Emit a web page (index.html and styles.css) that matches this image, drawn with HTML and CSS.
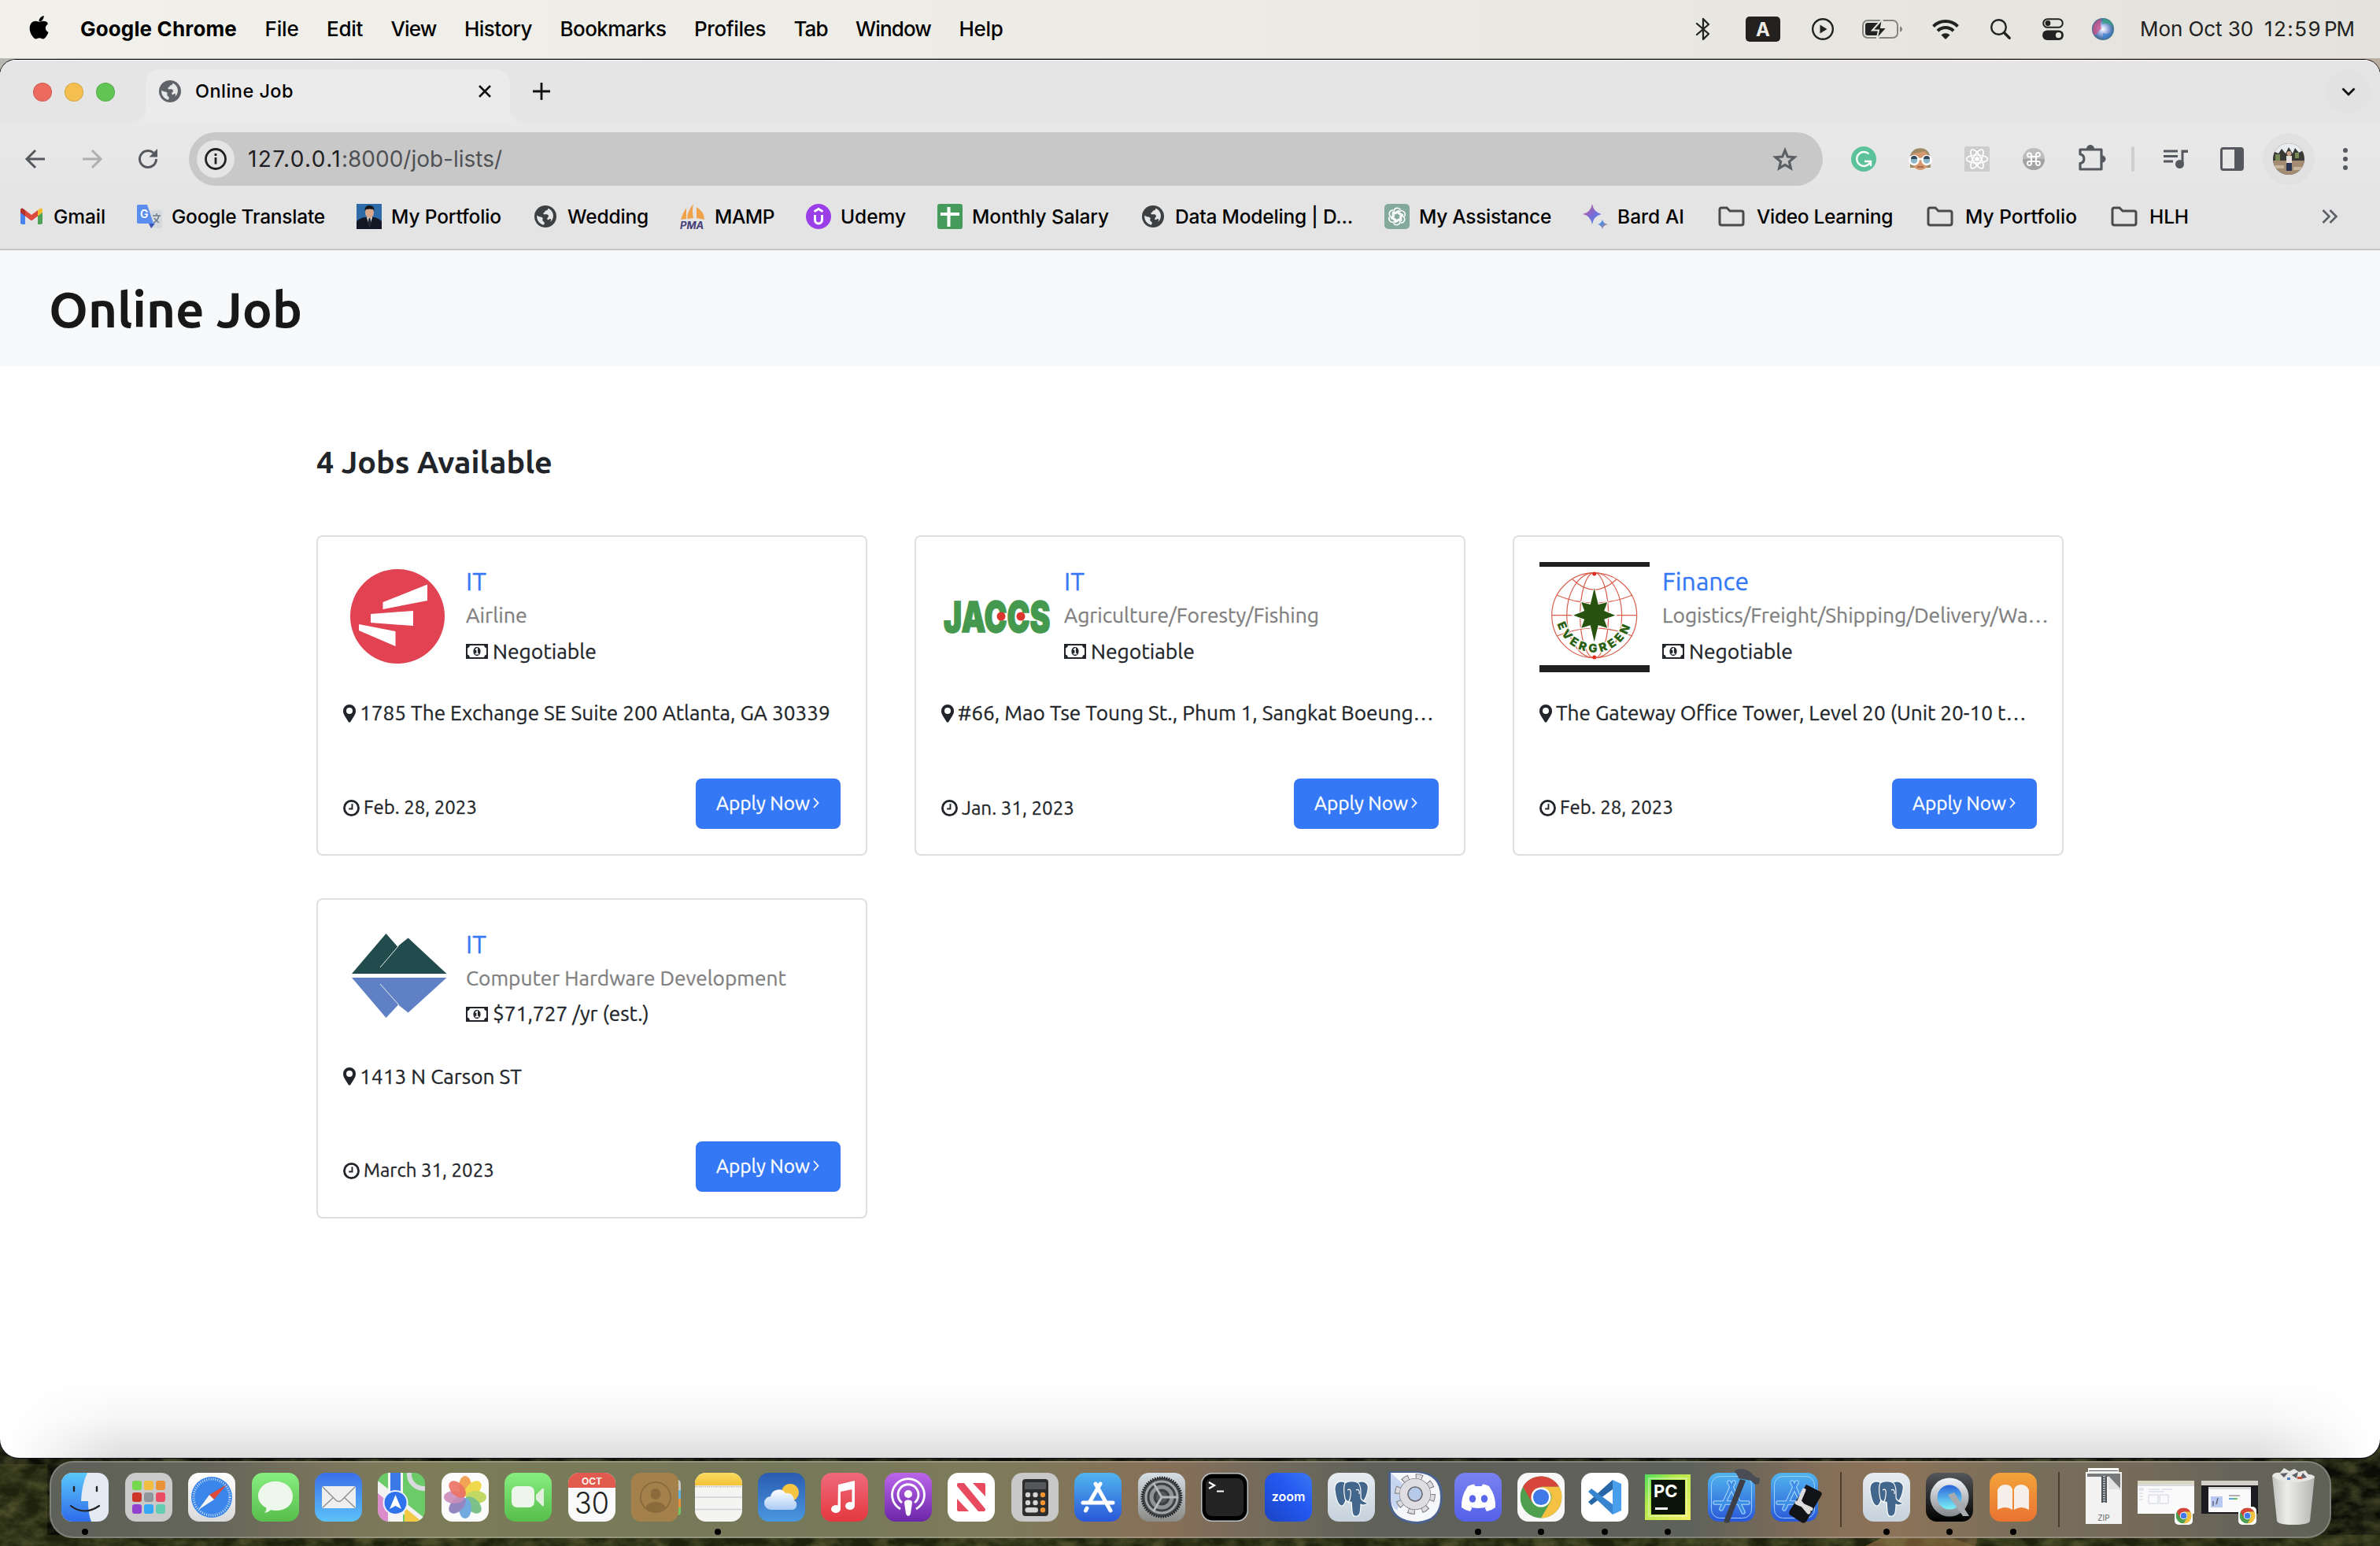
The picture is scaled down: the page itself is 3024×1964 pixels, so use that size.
FILE: index.html
```html
<!DOCTYPE html>
<html lang="en">
<head>
<meta charset="utf-8">
<title>Online Job</title>
<link rel="stylesheet" href="styles.css">
</head>
<body>
<svg class="defs" width="0" height="0">
  <defs>
    <linearGradient id="gBlue" x1="0" y1="0" x2="0" y2="1"><stop offset="0" stop-color="#5ac8fa"/><stop offset="1" stop-color="#2f6bea"/></linearGradient>
    <linearGradient id="gMail" x1="0" y1="0" x2="0" y2="1"><stop offset="0" stop-color="#3a6fe8"/><stop offset="1" stop-color="#5cc2f9"/></linearGradient>
    <linearGradient id="gGreen" x1="0" y1="0" x2="0" y2="1"><stop offset="0" stop-color="#87ef80"/><stop offset="1" stop-color="#57bd4b"/></linearGradient>
    <linearGradient id="gWhite" x1="0" y1="0" x2="0" y2="1"><stop offset="0" stop-color="#ffffff"/><stop offset="1" stop-color="#d9d9d9"/></linearGradient>
    <linearGradient id="gWeather" x1="0" y1="0" x2="0" y2="1"><stop offset="0" stop-color="#2a5bb0"/><stop offset="1" stop-color="#4a97e0"/></linearGradient>
    <linearGradient id="gCloud" x1="0" y1="0" x2="0" y2="1"><stop offset="0" stop-color="#ffffff"/><stop offset="1" stop-color="#aacbf3"/></linearGradient>
    <linearGradient id="gMusic" x1="0" y1="0" x2="0" y2="1"><stop offset="0" stop-color="#ee6a7b"/><stop offset="1" stop-color="#e4383f"/></linearGradient>
    <linearGradient id="gPod" x1="0" y1="0" x2="0" y2="1"><stop offset="0" stop-color="#bb66ea"/><stop offset="1" stop-color="#6c26a8"/></linearGradient>
    <linearGradient id="gStore" x1="0" y1="0" x2="0" y2="1"><stop offset="0" stop-color="#51b5ef"/><stop offset="1" stop-color="#2a57d8"/></linearGradient>
    <linearGradient id="gSettings" x1="0" y1="0" x2="0" y2="1"><stop offset="0" stop-color="#d5dfe5"/><stop offset="1" stop-color="#8b8b88"/></linearGradient>
    <linearGradient id="gZoom" x1="1" y1="0" x2="0" y2="1"><stop offset="0" stop-color="#3b7af0"/><stop offset=".4" stop-color="#2459f2"/><stop offset="1" stop-color="#1b44c4"/></linearGradient>
    <linearGradient id="gPg" x1="0" y1="0" x2="0" y2="1"><stop offset="0" stop-color="#e6ecf1"/><stop offset="1" stop-color="#c6d1dc"/></linearGradient>
    <linearGradient id="gDiscord" x1="0" y1="0" x2="0" y2="1"><stop offset="0" stop-color="#7a82f0"/><stop offset="1" stop-color="#5560ea"/></linearGradient>
    <linearGradient id="gPc" x1="0" y1="0" x2="1" y2="1"><stop offset="0" stop-color="#4fe05a"/><stop offset=".35" stop-color="#b3ea4a"/><stop offset="1" stop-color="#f3ee62"/></linearGradient>
    <linearGradient id="gQt" x1="0" y1="0" x2="0" y2="1"><stop offset="0" stop-color="#55565a"/><stop offset="1" stop-color="#000"/></linearGradient>
    <linearGradient id="gRing" x1="0" y1="0" x2="0" y2="1"><stop offset="0" stop-color="#f2f6fa"/><stop offset="1" stop-color="#84878b"/></linearGradient>
    <linearGradient id="gQtIn" x1="0" y1="0" x2="0" y2="1"><stop offset="0" stop-color="#2a62d8"/><stop offset="1" stop-color="#7df3f7"/></linearGradient>
    <linearGradient id="gBooks" x1="0" y1="0" x2="0" y2="1"><stop offset="0" stop-color="#f2a33a"/><stop offset="1" stop-color="#ea7332"/></linearGradient>
    <linearGradient id="gNote" x1="0" y1="0" x2="0" y2="1"><stop offset="0" stop-color="#fadb62"/><stop offset="1" stop-color="#f3c235"/></linearGradient>
    <linearGradient id="gBard" x1="0" y1="0" x2="1" y2="1"><stop offset="0" stop-color="#d9617e"/><stop offset=".4" stop-color="#7a6bd8"/><stop offset=".75" stop-color="#4d8fe6"/><stop offset="1" stop-color="#e2705a"/></linearGradient>
    <linearGradient id="gCan" x1="0" y1="0" x2="1" y2="0"><stop offset="0" stop-color="#c2c2c0"/><stop offset=".35" stop-color="#ececea"/><stop offset="1" stop-color="#b4b4b2"/></linearGradient>
    <radialGradient id="gSiri"><stop offset="0" stop-color="#fff"/><stop offset=".4" stop-color="#a9b8e6"/><stop offset=".75" stop-color="#5a7fb8"/><stop offset="1" stop-color="#3d6c86"/></radialGradient>
    <filter id="leaves" x="0" y="0" width="100%" height="100%">
      <feTurbulence type="fractalNoise" baseFrequency=".035 .06" numOctaves="4" seed="7"/>
      <feColorMatrix values="0 0 0 0 .24  0 0 0 0 .25  0 0 0 0 .08  1.9 1.2 0 0 -1.15"/>
    </filter>

    <symbol id="globe" viewBox="0 0 28 28"><circle cx="14" cy="14" r="14" fill="currentColor"/><path d="M16 3.2c2.600.8.8 2.900-1 3.100-1.700.2-1.300 2.300-2.700 2.700-1.800.5-.6 2.600.6 2.400 2-.3 4.600-.4 5.100 1.900.3 1.500-1.800 2-1.700 3.700.1 1.600 1.900 1.300 2.700.5 1-.9 2.200-.2 2.100 1l-.8 2.500c3.500-2.600 4.700-8.200 2.600-12.200-1.300-2.900-3.700-4.900-6.900-5.600zM3.300 12.500c-.9 5.900 3.100 11.100 8.700 12.300l.9-2.500c-.1-1.700-2.300-1.500-2.600-3.200-.2-1.300.8-2.200.1-3.300-1.500-1.900-4.700-.7-7.100-3.300z" class="globe-land"/></symbol>
    <symbol id="folder" viewBox="0 0 34 26"><path d="M2 4.500A2.500 2.500 0 0 1 4.500 2H11l4 4h14.500A2.500 2.500 0 0 1 32 8.500v13a2.500 2.500 0 0 1-2.500 2.500h-25A2.500 2.500 0 0 1 2 21.500z" fill="none" stroke="#4a4a4c" stroke-width="3"/></symbol>
    <symbol id="note" viewBox="0 0 28 19"><path fill="currentColor" fill-rule="evenodd" d="M0 0h28v19H0zM5 2Q4.600 5 2 5.500v8Q4.600 14 5 17h18q.4-3 3-3.500v-8Q23.400 5 23 2z"/><ellipse cx="14" cy="9.500" rx="4.600" ry="5.800" fill="currentColor"/><path d="M12 7.400l2.200-1.500v6.300M11.800 12.600h4.600" stroke="#fff" stroke-width="1.600" fill="none"/></symbol>
    <symbol id="pin" viewBox="0 0 16 23"><path fill="currentColor" fill-rule="evenodd" d="M8 0a8 8 0 0 1 8 8c0 3-1 4.500-2 6.600L9.300 22a1.500 1.500 0 0 1-2.600 0L2 14.600C1 12.500 0 11 0 8a8 8 0 0 1 8-8zm0 4a4 4 0 1 0 0 8 4 4 0 0 0 0-8z"/></symbol>
    <symbol id="clock" viewBox="0 0 22 22"><circle cx="11" cy="11" r="9.500" fill="none" stroke="currentColor" stroke-width="2.900"/><path d="M12 5.500v6.500H7.500" fill="none" stroke="currentColor" stroke-width="2"/></symbol>
    <symbol id="chev" viewBox="0 0 8 14"><path d="M1 1l5.500 6L1 13" fill="none" stroke="#fff" stroke-width="1.800"/></symbol>
    <symbol id="chrome" viewBox="0 0 54 54"><circle cx="27" cy="27" r="27" fill="#4f9f50"/><path d="M3.600 13.500A27 27 0 0 1 50.400 13.500H27L15.300 33.700z" fill="#d6453a"/><path d="M50.400 13.500A27 27 0 0 1 27 54L38.700 33.700A13.500 13.500 0 0 0 38.700 20.200L27 13.500z" fill="#f4c143"/><circle cx="27" cy="27" r="12.800" fill="#fff"/><circle cx="27" cy="27" r="10.300" fill="#4179e8"/></symbol>
    <symbol id="elephant" viewBox="0 0 60 62">
      <rect width="60" height="62" rx="14" fill="url(#gPg)"/>
      <g fill="#43668c" stroke="#fff" stroke-width="1.200" stroke-linejoin="round">
        <path d="M38 12c8-3 15 1 13 10-1 7-5 14-8 17l-5-8z"/>
        <path d="M22 12c-7-3-14 0-13 10 1 10 4 19 8 20 3 1 5-4 6-7z"/>
        <path d="M22 13c4-3 13-3 17 0 4 5 3 13 3 18 0 4 6 7 9 7-2 3-7 4-9 2 0 5 0 10-2 13-2 3-7 3-8 0-2-4-1-11-2-16-3 1-7-1-8-4-1-6-3-14 0-20z"/>
      </g>
      <path d="M25 22c4-3 5 2 4 7s-1 8-4 8M36 22c3-2 5 1 4 5" stroke="#fff" stroke-width="1.200" fill="none"/>
    </symbol>
    <symbol id="blueprint" viewBox="0 0 60 62">
      <rect width="60" height="62" rx="14" fill="url(#gStore)"/>
      <rect x="4.500" y="4.500" width="51" height="53" rx="11" fill="none" stroke="#9bd0f7" stroke-width="1"/>
      <path d="M33 12L17 46M27 12l18 38M9 38h42" stroke="#a9d9fb" stroke-width="5.500" stroke-linecap="round"/><path d="M33 12L17 46M27 12l18 38M9 38h42" stroke="#3f8ee6" stroke-width="3.500" stroke-linecap="round"/>
    </symbol>
  </defs>
</svg>

<header class="menubar">
  <svg class="apple" viewBox="0 0 26 31" width="26" height="31"><path d="M18.700 0c.2 2.100-.6 4-1.800 5.400-1.200 1.400-2.900 2.300-4.400 2.200-.3-2 .7-4 1.800-5.200C15.500 1.100 17.300.1 18.700 0zM23.600 10.900c-1.700 1-2.800 2.600-2.800 4.700 0 2.500 1.500 4.400 3.700 5.300-.5 1.600-1.300 3.200-2.400 4.800-1.400 2-2.600 3.700-4.500 3.700-1.700 0-2.400-1.100-4.500-1.100s-2.900 1.100-4.500 1.200c-1.900.1-3.300-1.900-4.700-3.900C1 21.400-.8 14.400 2.300 10c1.400-2 3.700-3.200 5.900-3.200 2 0 3.500 1.200 4.900 1.200 1.300 0 3.200-1.400 5.700-1.200 1.500.1 3.600.6 4.800 2.400z" fill="#000"/></svg>
  <nav class="menus">
    <b class="fit" data-w="199">Google Chrome</b>
    <span class="fit" data-w="43">File</span>
    <span class="fit" data-w="46">Edit</span>
    <span class="fit" data-w="58">View</span>
    <span class="fit" data-w="86">History</span>
    <span class="fit" data-w="135">Bookmarks</span>
    <span class="fit" data-w="91">Profiles</span>
    <span class="fit" data-w="43">Tab</span>
    <span class="fit" data-w="96">Window</span>
    <span class="fit" data-w="56">Help</span>
  </nav>
  <div class="status">
    <svg width="18" height="30" viewBox="0 0 18 30"><path d="M1 8l15 13-7 7V2l7 7L1 22" fill="none" stroke="#222" stroke-width="2.300" stroke-linejoin="round" stroke-linecap="round"/></svg>
    <svg width="44" height="32" viewBox="0 0 44 32"><rect width="44" height="32" rx="5" fill="#22211f"/><text x="22" y="25" text-anchor="middle" font-size="24" font-weight="700" fill="#ecebe5">A</text></svg>
    <svg width="28" height="28" viewBox="0 0 28 28"><circle cx="14" cy="14" r="12.800" fill="none" stroke="#222" stroke-width="2.400"/><path d="M10.500 8.500v11l9-5.500z" fill="#222"/></svg>
    <svg width="52" height="26" viewBox="0 0 52 26"><rect x="1" y="2" width="44" height="22" rx="6" fill="none" stroke="#85847f" stroke-width="2"/><rect x="4" y="5" width="19" height="16" rx="3" fill="#222"/><path d="M48 9.500v7q3-1 3-3.500t-3-3.500z" fill="#85847f"/><path d="M26 0L13 14.500h8L18.500 26 32 11h-8z" fill="#222" stroke="#e6e5df" stroke-width="2"/></svg>
    <svg width="34" height="26" viewBox="0 0 34 26"><path d="M1.500 9.500a22 22 0 0 1 31 0M7 15.200a14.300 14.300 0 0 1 20 0" fill="none" stroke="#222" stroke-width="4"/><path d="M17 26l-5.500-5.500a8 8 0 0 1 11 0z" fill="#222"/></svg>
    <svg width="26" height="26" viewBox="0 0 26 26"><circle cx="10.500" cy="10.500" r="9.300" fill="none" stroke="#222" stroke-width="2.400"/><path d="M17.500 17.500l6.700 6.700" stroke="#222" stroke-width="3.400" stroke-linecap="round"/></svg>
    <svg width="27" height="28" viewBox="0 0 27 28"><rect x="1.200" y="1.200" width="24.600" height="10.600" rx="5.300" fill="none" stroke="#222" stroke-width="2"/><circle cx="7" cy="6.500" r="3.400" fill="#222"/><rect y="15.500" width="27" height="12.500" rx="6.200" fill="#222"/><circle cx="20.500" cy="21.700" r="3.600" fill="#e5e4de"/></svg>
    <svg width="28" height="28" viewBox="0 0 28 28"><circle cx="14" cy="14" r="14" fill="url(#gSiri)"/><path d="M1 14A13.500 13.500 0 0 1 12 1q-2 8 0 12L4 22q-3-3-3-8z" fill="#d24f86" opacity=".75"/><path d="M14 .5q10 1 13 10-8-5-14-3z" fill="#3aa384" opacity=".8"/><path d="M14 27q9-1 13-10-6 5-13 2z" fill="#3a7fd0" opacity=".7"/></svg>
  </div>
  <div class="clock"><span class="fit" data-w="144">Mon Oct 30</span><span class="fit" data-w="73">12:59</span><span class="fit" data-w="38">PM</span></div>
</header>

<main class="window">
  <div class="tabstrip">
    <div class="lights"><i class="red"></i><i class="yellow"></i><i class="green"></i></div>
    <div class="tab">
      <svg class="tab-globe" width="28" height="28"><use href="#globe"/></svg>
      <span class="fit tab-title" data-w="125">Online Job</span>
      <svg width="16" height="16" viewBox="0 0 16 16"><path d="M1 1l14 14M15 1L1 15" stroke="#111" stroke-width="2.600"/></svg>
    </div>
    <svg class="plus" width="22" height="22" viewBox="0 0 22 22"><path d="M11 0v22M0 11h22" stroke="#111" stroke-width="2.800"/></svg>
    <div class="tab-search"><svg width="18" height="12" viewBox="0 0 18 12"><path d="M1.500 1.500L9 9l7.500-7.500" fill="none" stroke="#111" stroke-width="2.800"/></svg></div>
  </div>

  <div class="toolbar">
    <div class="nav">
      <svg width="26" height="26" viewBox="0 0 26 26"><path d="M25 13H2.500M13 2L2 13l11 11" fill="none" stroke="#55595e" stroke-width="3"/></svg>
      <svg width="26" height="26" viewBox="0 0 26 26"><path d="M1 13h22.500M13 2l11 11-11 11" fill="none" stroke="#adafb1" stroke-width="3"/></svg>
      <svg width="26" height="26" viewBox="0 0 26 26"><path d="M23.500 13A10.500 10.500 0 1 1 20 5.200" fill="none" stroke="#55595e" stroke-width="3"/><path d="M25 0v10.500H14.500z" fill="#55595e"/></svg>
    </div>
    <div class="omnibox">
      <span class="info"><svg width="28" height="28" viewBox="0 0 28 28"><circle cx="14" cy="14" r="12.500" fill="none" stroke="#1f2023" stroke-width="2.800"/><path d="M14 12v8.500M14 7v3" stroke="#1f2023" stroke-width="2.800"/></svg></span>
      <span class="url"><span class="fit host" data-w="119">127.0.0.1</span><span class="fit" data-w="204">:8000/job-lists/</span></span>
      <svg width="32" height="31" viewBox="0 0 32 31"><path d="M16 4l3.300 8 8.700.7-6.600 5.700 2 8.400L16 22.400l-7.400 4.400 2-8.400L4 12.700l8.700-.7z" fill="none" stroke="#5c5f63" stroke-width="3.200"/></svg>
    </div>
    <div class="extensions">
      <svg width="32" height="32" viewBox="0 0 32 32"><circle cx="16" cy="16" r="16" fill="#5bc29b"/><path d="M22.500 9.500a9 9 0 1 0 1.500 11M17 19h8v6" fill="none" stroke="#fff" stroke-width="2.400"/></svg>
      <svg width="32" height="32" viewBox="0 0 32 32"><path d="M3 12C6-1 26-1 28 12l1 15H3z" fill="#9d8a65"/><path d="M7 9l15-3 4 6v10q-3 8-10 8T6 22z" fill="#d5996f"/><circle cx="8" cy="17.500" r="5.500" fill="#8ab8c8" stroke="#fff" stroke-width="2.400"/><circle cx="24" cy="17.500" r="5.500" fill="#8ab8c8" stroke="#fff" stroke-width="2.400"/><path d="M13 16h6" stroke="#fff" stroke-width="2.400"/><path d="M4 16a4 4 0 0 1 8 0zM20 16a4 4 0 0 1 8 0z" fill="#32485a"/><path d="M12 26h8" stroke="#a65a48" stroke-width="1.500"/></svg>
      <svg width="32" height="32" viewBox="0 0 32 32"><rect width="32" height="32" rx="2" fill="#cdcdcd"/><g fill="none" stroke="#fff" stroke-width="1.700"><ellipse cx="16" cy="16" rx="13.500" ry="5"/><ellipse cx="16" cy="16" rx="13.500" ry="5" transform="rotate(60 16 16)"/><ellipse cx="16" cy="16" rx="13.500" ry="5" transform="rotate(120 16 16)"/></g><circle cx="16" cy="16" r="2.800" fill="#fff"/></svg>
      <svg width="28" height="28" viewBox="0 0 28 28"><circle cx="14" cy="14" r="14" fill="#bdbdbd"/><path d="M0 14h28a14 14 0 0 1-28 0z" fill="#a2a2a2"/><path d="M11 11h6v6h-6zM11 11V9a2.500 2.500 0 1 0-2.500 2.500zM17 11h2.500A2.500 2.500 0 1 0 17 9zM17 17v2.500a2.500 2.500 0 1 0 2.500-2.500zM11 17H8.500a2.500 2.500 0 1 0 2.500 2.500z" fill="none" stroke="#fff" stroke-width="1.900"/></svg>
      <svg class="puzzle" width="34" height="34" viewBox="0 0 34 34"><path d="M3.500 7H29v25H2V24.500c6.500-1 6.500-10.500 0-11.500V7z" fill="none" stroke="#55595f" stroke-width="3.200" stroke-linejoin="round"/><path d="M10 6a5 5 0 0 1 10 0zM30 14.500a4.500 4.500 0 0 1 0 9z" fill="#55595f"/></svg>
      <i class="divider"></i>
      <svg width="32" height="26" viewBox="0 0 32 26"><path d="M0 3h18M0 9.500h18M0 16h12" stroke="#55595f" stroke-width="3"/><path d="M22.500 1.500H31v3.500h-5.500v14h-3z" fill="#55595f"/><circle cx="20.500" cy="19.500" r="5.500" fill="#55595f"/></svg>
      <svg width="30" height="30" viewBox="0 0 30 30"><rect x="1.500" y="1.500" width="27" height="27" rx="2.500" fill="none" stroke="#55595f" stroke-width="3"/><path d="M18 2h11v26H18z" fill="#55595f"/></svg>
      <span class="avatar"><svg width="40" height="40" viewBox="0 0 40 40"><clipPath id="av"><circle cx="20" cy="20" r="20"/></clipPath><g clip-path="url(#av)"><path d="M0 0h40v40H0z" fill="#3a3a35"/><path d="M0 0h40v8l-7 4-5-6-3 7-5-8-4 8-5-6-4 6-7-3z" fill="#e9edf2"/><path d="M0 22h40v18H0z" fill="#a38b74"/><path d="M0 28h14v4H0zM26 30h14v4H26z" fill="#c9b6a0"/><path d="M3 14h6v8H3zM28 12h5v7h-5z" fill="#758a55"/><path d="M17 16h7v9h-7z" fill="#e8e0da"/><path d="M17 25h7v10h-7z" fill="#2b3450"/><circle cx="20.500" cy="13" r="3" fill="#cda28a"/></g></svg></span>
      <svg width="6" height="30" viewBox="0 0 6 30"><g fill="#55595f"><circle cx="3" cy="4" r="3"/><circle cx="3" cy="15" r="3"/><circle cx="3" cy="26" r="3"/></g></svg>
    </div>
  </div>

  <div class="bookmarks">
    <a><svg width="32" height="32" viewBox="0 0 32 32"><path d="M2 7v17a2 2 0 0 0 2 2h4V12z" fill="#4a84ee"/><path d="M30 7v17a2 2 0 0 1-2 2h-4V12z" fill="#4ea155"/><path d="M24 8l3-2.200C28.500 4.700 30 6 30 7.500V11l-6 4.500z" fill="#f3bc2e"/><path d="M8 8L5 5.800C3.500 4.700 2 6 2 7.500V11l6 4.500z" fill="#b4322c"/><path d="M8 15.500V8l8 6 8-6v7.500l-8 6z" fill="#db4a3d"/></svg><span class="fit" data-w="66">Gmail</span></a>
    <a><svg width="32" height="32" viewBox="0 0 32 32"><path d="M13 8h17a2 2 0 0 1 2 2v19a2 2 0 0 1-2 2H18z" fill="#d6dade"/><path d="M15 25h8l-5 6z" fill="#3a55b8"/><path d="M2 1h11l8 24H2a2 2 0 0 1-2-2V3a2 2 0 0 1 2-2z" fill="#5a8dee"/><text x="4" y="18" font-size="14" font-weight="600" fill="#fff">G</text><path d="M20 15h10M25 12v3M28 15q-2 7-7 9M22 18q3 4 6 6" stroke="#6b7b89" stroke-width="1.500" fill="none"/></svg><span class="fit" data-w="195">Google Translate</span></a>
    <a><svg width="32" height="32" viewBox="0 0 32 32"><path d="M0 0h32v32H0z" fill="#2e6ba8"/><path d="M0 32V22q6-5 11-5h10q5 0 11 5v10z" fill="#141824"/><path d="M13 17h7l-3.500 12z" fill="#e7ebf0"/><path d="M15.500 18h2l1 7-2 4-2-4z" fill="#20283a"/><ellipse cx="16.500" cy="11" rx="5.500" ry="7" fill="#d9a88c"/><path d="M10.500 9Q10 2 16.500 2T22.500 9L21 7q-4-1-9 0z" fill="#15161b"/></svg><span class="fit" data-w="140">My Portfolio</span></a>
    <a><svg class="bm-globe" width="32" height="28"><use href="#globe"/></svg><span class="fit" data-w="103">Wedding</span></a>
    <a><svg width="32" height="32" viewBox="0 0 32 32"><path d="M8 5Q3 12 1 20l7-1zM17 0Q9 10 9 19l8-1Q15 8 17 0zM21 4q10 6 10 16l-10-2z" fill="#f0a24a"/><text x="0" y="31.500" font-size="13" font-weight="700" font-style="italic" fill="#45407a">PMA</text></svg><span class="fit" data-w="76">MAMP</span></a>
    <a><svg width="32" height="32" viewBox="0 0 32 32"><circle cx="16" cy="16" r="16" fill="#9a3fe8"/><path d="M11.500 14v6.500a4.500 4.500 0 0 0 9 0V14" fill="none" stroke="#fff" stroke-width="3"/><path d="M10.500 9.800L16 6.500l5.500 3.300" fill="none" stroke="#fff" stroke-width="2.800"/></svg><span class="fit" data-w="83">Udemy</span></a>
    <a><svg width="32" height="32" viewBox="0 0 32 32"><rect width="32" height="32" rx="3" fill="#449b5c"/><path d="M14.500 4v25M4 13h24" stroke="#fff" stroke-width="4"/></svg><span class="fit" data-w="174">Monthly Salary</span></a>
    <a><svg class="bm-globe" width="32" height="28"><use href="#globe"/></svg><span class="fit" data-w="226">Data Modeling | D...</span></a>
    <a><svg width="32" height="32" viewBox="0 0 32 32"><rect width="32" height="32" rx="5" fill="#83a99b"/><g fill="none" stroke="#fff" stroke-width="1.600"><path id="petal" d="M12 17V9.500a4.500 4.500 0 0 1 8.500-1.800M12 12l6.500-3.800"/><use href="#petal" transform="rotate(60 16 16)"/><use href="#petal" transform="rotate(120 16 16)"/><use href="#petal" transform="rotate(180 16 16)"/><use href="#petal" transform="rotate(240 16 16)"/><use href="#petal" transform="rotate(300 16 16)"/></g></svg><span class="fit" data-w="168">My Assistance</span></a>
    <a><svg width="32" height="32" viewBox="0 0 32 32"><path d="M12 0q2 11 12 13-10 2-12 13Q10 15 0 13 10 11 12 0zM25 20q1 5 7 6-6 1-7 6-1-5-6-6 5-1 6-6z" fill="url(#gBard)"/></svg><span class="fit" data-w="85">Bard AI</span></a>
    <a class="dir"><svg width="34" height="26"><use href="#folder"/></svg><span class="fit" data-w="173">Video Learning</span></a>
    <a class="dir"><svg width="34" height="26"><use href="#folder"/></svg><span class="fit" data-w="142">My Portfolio</span></a>
    <a class="dir"><svg width="34" height="26"><use href="#folder"/></svg><span class="fit" data-w="50">HLH</span></a>
    <svg class="more" width="20" height="18" viewBox="0 0 20 18"><path d="M1.500 1l8 8-8 8M10.500 1l8 8-8 8" fill="none" stroke="#5c5f66" stroke-width="2.600"/></svg>
  </div>

  <section class="page">
    <div class="banner"><h1 class="fit" data-w="322">Online Job</h1></div>
    <div class="content">
      <h2><span class="fit" data-w="300">4 Jobs Available</span></h2>
      <div class="cards">
        <article class="card">
          <div class="top">
            <svg width="140" height="140" viewBox="0 0 140 140"><path d="M0 0h140v140H0z" fill="#fefefe"/><circle cx="69" cy="69" r="60" fill="#e14352"/><path d="M50.500 51L107 28.500V49L50.500 60zM35 66l54-4v19l-54-4zM20 79l46.500 9v19L20 87z" fill="#fff"/></svg>
            <div class="info-col"><a class="role">IT</a><div class="field"><span class="fit" data-w="78">Airline</span></div><div class="pay"><svg width="28" height="19"><use href="#note"/></svg><span class="fit" data-w="132">Negotiable</span></div></div>
          </div>
          <div class="addr"><svg width="16" height="23"><use href="#pin"/></svg><span class="fit" data-w="598">1785 The Exchange SE Suite 200 Atlanta, GA 30339</span></div>
          <div class="foot"><div class="date"><svg width="21" height="21"><use href="#clock"/></svg><span class="fit" data-w="144">Feb. 28, 2023</span></div><a class="apply"><span class="fit" data-w="119">Apply Now</span><svg width="8" height="14"><use href="#chev"/></svg></a></div>
        </article>
        <article class="card">
          <div class="top">
            <svg width="140" height="140" viewBox="0 0 140 140"><g transform="translate(3 89) scale(.72 1)"><text class="jaccs">JACCS</text></g><circle cx="76" cy="69" r="5.500" fill="#dc352e"/><circle cx="101" cy="69" r="5.500" fill="#dc352e"/></svg>
            <div class="info-col"><a class="role">IT</a><div class="field"><span class="fit" data-w="324">Agriculture/Foresty/Fishing</span></div><div class="pay"><svg width="28" height="19"><use href="#note"/></svg><span class="fit" data-w="132">Negotiable</span></div></div>
          </div>
          <div class="addr"><svg width="16" height="23"><use href="#pin"/></svg><span class="fit" data-w="605">#66, Mao Tse Toung St., Phum 1, Sangkat Boeung…</span></div>
          <div class="foot"><div class="date"><svg width="21" height="21"><use href="#clock"/></svg><span class="fit" data-w="143">Jan. 31, 2023</span></div><a class="apply"><span class="fit" data-w="119">Apply Now</span><svg width="8" height="14"><use href="#chev"/></svg></a></div>
        </article>
        <article class="card">
          <div class="top">
            <svg width="140" height="140" viewBox="0 0 140 140"><path d="M0 0h140v6H0zM0 131h140v9H0z" fill="#202020"/>
              <g fill="none" stroke="#d9604f" stroke-width="1.200"><circle cx="69.700" cy="67.700" r="54"/><ellipse cx="69.700" cy="67.700" rx="35" ry="54"/><ellipse cx="69.700" cy="67.700" rx="18" ry="54"/><path d="M15.700 67.700h108M22 42q48 20 96 0M42 22q27 26 56 0M22 94q48-20 96 0"/></g>
              <path d="M69.700 33l5 21 11.500-3-4 11 14 5.700-14 5 4 11-11.500-3.500-5 21-5-21-11.500 3.500 4-11-14-5 14-5.700-4-11 11.500 3z" fill="#27530f" stroke="#fff" stroke-width="2" paint-order="stroke"/>
              <circle cx="69.700" cy="15" r="2.500" fill="#e02b1d"/><circle cx="69.700" cy="121" r="2.500" fill="#e02b1d"/>
              <path id="arc" d="M21 66a48.700 48.700 0 0 0 97.400 0" fill="none"/><text class="evergreen"><textPath href="#arc" startOffset="50%" text-anchor="middle">EVERGREEN</textPath></text></svg>
            <div class="info-col"><a class="role">Finance</a><div class="field"><span class="fit" data-w="491">Logistics/Freight/Shipping/Delivery/Wa…</span></div><div class="pay"><svg width="28" height="19"><use href="#note"/></svg><span class="fit" data-w="132">Negotiable</span></div></div>
          </div>
          <div class="addr"><svg width="16" height="23"><use href="#pin"/></svg><span class="fit" data-w="598">The Gateway Office Tower, Level 20 (Unit 20-10 t…</span></div>
          <div class="foot"><div class="date"><svg width="21" height="21"><use href="#clock"/></svg><span class="fit" data-w="144">Feb. 28, 2023</span></div><a class="apply"><span class="fit" data-w="119">Apply Now</span><svg width="8" height="14"><use href="#chev"/></svg></a></div>
        </article>
        <article class="card">
          <div class="top">
            <svg width="140" height="140" viewBox="0 0 140 140"><path d="M11 62l43.500-51L69 27.500l13.600-11L131.500 62z" fill="#214b4d"/><path d="M11 67l43.500 51L70 101.500l12.600 10L131.500 67z" fill="#6080c6"/><path d="M70.500 26.500L47 54M47 75l24 27" stroke="#e7efee" stroke-width="1"/></svg>
            <div class="info-col"><a class="role">IT</a><div class="field"><span class="fit" data-w="407">Computer Hardware Development</span></div><div class="pay"><svg width="28" height="19"><use href="#note"/></svg><span class="fit" data-w="199">$71,727 /yr (est.)</span></div></div>
          </div>
          <div class="addr"><svg width="16" height="23"><use href="#pin"/></svg><span class="fit" data-w="206">1413 N Carson ST</span></div>
          <div class="foot"><div class="date"><svg width="21" height="21"><use href="#clock"/></svg><span class="fit" data-w="166">March 31, 2023</span></div><a class="apply"><span class="fit" data-w="119">Apply Now</span><svg width="8" height="14"><use href="#chev"/></svg></a></div>
        </article>
      </div>
    </div>
    <div class="dock-shade"></div>
  </section>
</main>

<svg class="wallpaper" viewBox="0 0 3024 164" preserveAspectRatio="none"><path d="M0 0h3024v164H0z" fill="#0a0c05"/><path d="M0 60h60v104H0zM0 150h3024v14H0z" fill="#1f230d"/><path d="M2440 164q20-26 0-60l40-8q40 40 30 68z" fill="#4a3822"/><path d="M2390 154h90l30 10H2370z" fill="#6a5230"/><path d="M0 0h3024v164H0z" filter="url(#leaves)" opacity=".42"/></svg>

<footer class="dock">
  <div class="slot run"><svg viewBox="0 0 60 62"><rect width="60" height="62" rx="14" fill="#e4eaf2"/><path d="M14 0h19q-7 14-8 36h9q0 16 4 26H14A14 14 0 0 1 0 48V14A14 14 0 0 1 14 0z" fill="url(#gBlue)"/><path d="M16 18v5M45 18v5" stroke="#222" stroke-width="2.400" stroke-linecap="round"/><path d="M12 42q17 13 36 0" fill="none" stroke="#222" stroke-width="2.200" stroke-linecap="round"/></svg></div>
  <div class="slot"><svg viewBox="0 0 60 62"><rect width="60" height="62" rx="14" fill="#cacaca"/><g><rect x="9" y="10" width="12" height="12" rx="3" fill="#76d84f"/><rect x="24" y="10" width="12" height="12" rx="3" fill="#f2bd40"/><rect x="39" y="10" width="12" height="12" rx="3" fill="#ea9238"/><rect x="9" y="25" width="12" height="12" rx="3" fill="#cc3527"/><rect x="24" y="25" width="12" height="12" rx="3" fill="#8f9598"/><rect x="39" y="25" width="12" height="12" rx="3" fill="#eb4d63"/><rect x="9" y="40" width="12" height="12" rx="3" fill="#9143cf"/><rect x="24" y="40" width="12" height="12" rx="3" fill="#36a8f5"/><rect x="39" y="40" width="12" height="12" rx="3" fill="#65cdb0"/></g></svg></div>
  <div class="slot"><svg viewBox="0 0 60 62"><rect width="60" height="62" rx="14" fill="url(#gWhite)"/><circle cx="30" cy="31" r="26" fill="#3b86ea"/><circle cx="30" cy="31" r="23" fill="none" stroke="#c7dffa" stroke-width="3" stroke-dasharray="1 1.800"/><path d="M49 15L27 28l6 6z" fill="#dd4a3c"/><path d="M13 47l14-19 6 6z" fill="#f4f4f4"/></svg></div>
  <div class="slot"><svg viewBox="0 0 60 62"><rect width="60" height="62" rx="14" fill="url(#gGreen)"/><path d="M30 11c13 0 22 8 22 19s-9 18-22 18q-3 0-6-.7-3 3-8 3.500 3-3 2.500-6C12 41 8 36 8 30c0-11 9-19 22-19z" fill="#eef7ec"/></svg></div>
  <div class="slot"><svg viewBox="0 0 60 62"><rect width="60" height="62" rx="14" fill="url(#gMail)"/><rect x="9" y="17" width="43" height="28" rx="2.500" fill="#efefef"/><path d="M10 18l17 17q3.500 3 7 0l17-17M10 44l14-13M51 44L37 31" fill="none" stroke="#919191" stroke-width="1.500"/></svg></div>
  <div class="slot"><svg viewBox="0 0 60 62"><clipPath id="mp"><rect width="60" height="62" rx="14"/></clipPath><g clip-path="url(#mp)"><path d="M0 0h60v62H0z" fill="#6bcb68"/><path d="M0 24l14 10v28H0z" fill="#db8ccb"/><path d="M0 10l60 48v4H44L0 26z" fill="#f1f1f1"/><path d="M34 44l22 18H34z" fill="#f3ca45"/><path d="M13 0h19v62H13z" fill="#f5f5f5"/><path d="M16 0h13v30H16z" fill="#3b79e6"/><circle cx="58" cy="2" r="18" fill="none" stroke="#d9dadf" stroke-width="6"/></g><circle cx="22.500" cy="38" r="15" fill="#2f73ec" stroke="#eef2fb" stroke-width="2"/><path d="M22.500 28l7.500 18-7.500-4-7.500 4z" fill="#fff"/></svg></div>
  <div class="slot"><svg viewBox="0 0 60 62"><rect width="60" height="62" rx="14" fill="#fbfbfb"/><g opacity=".85"><ellipse cx="30" cy="17" rx="8" ry="13" fill="#f0953a"/><ellipse cx="30" cy="17" rx="8" ry="13" fill="#efd32f" transform="rotate(45 30 31)"/><ellipse cx="30" cy="17" rx="8" ry="13" fill="#b8d34a" transform="rotate(90 30 31)"/><ellipse cx="30" cy="17" rx="8" ry="13" fill="#68b877" transform="rotate(135 30 31)"/><ellipse cx="30" cy="17" rx="8" ry="13" fill="#5a9ddb" transform="rotate(180 30 31)"/><ellipse cx="30" cy="17" rx="8" ry="13" fill="#8272b8" transform="rotate(225 30 31)"/><ellipse cx="30" cy="17" rx="8" ry="13" fill="#c37aae" opacity=".9" transform="rotate(270 30 31)"/><ellipse cx="30" cy="17" rx="8" ry="13" fill="#e95b48" opacity=".9" transform="rotate(315 30 31)"/></g></svg></div>
  <div class="slot"><svg viewBox="0 0 60 62"><rect width="60" height="62" rx="14" fill="url(#gGreen)"/><rect x="9" y="17" width="29" height="27" rx="7" fill="#edf6eb"/><path d="M40 28l8-8q2-1 2 1v20q0 2-2 1l-8-8z" fill="#e0f0dc"/></svg></div>
  <div class="slot"><svg viewBox="0 0 60 62"><rect width="60" height="62" rx="14" fill="#fafafa"/><path d="M0 19v-5A14 14 0 0 1 14 0h32a14 14 0 0 1 14 14v5z" fill="#e2594d"/><text x="30" y="14.500" text-anchor="middle" font-size="12" font-weight="600" fill="#fff">OCT</text><text x="30" y="52" text-anchor="middle" font-size="38" font-weight="300" textLength="44" lengthAdjust="spacingAndGlyphs" fill="#222">30</text></svg></div>
  <div class="slot"><svg viewBox="0 0 60 62"><path d="M52 9h8q3 1 3 6v7H52z" fill="#c9c9c4"/><path d="M52 22h11v11H52z" fill="#5fb4e2"/><path d="M52 33h11v11H52z" fill="#e8913b"/><path d="M52 44h11v6q0 3-3 4h-8z" fill="#74c463"/><rect width="60" height="62" rx="12" fill="#a4804a"/><circle cx="31" cy="31" r="19" fill="none" stroke="#86663a" stroke-width="1.500"/><ellipse cx="31" cy="27" rx="6.500" ry="7" fill="#8b6a3c"/><path d="M18 44q4-7 13-7t13 7q-5 6-13 6t-13-6z" fill="#8b6a3c"/></svg></div>
  <div class="slot run"><svg viewBox="0 0 60 62"><rect width="60" height="62" rx="14" fill="#f4f4f2"/><path d="M0 16v-2A14 14 0 0 1 14 0h32a14 14 0 0 1 14 14v2z" fill="url(#gNote)"/><path d="M0 17.500h60" stroke="#c3c1bc" stroke-width="2" stroke-dasharray="1.500 1"/><path d="M0 31h60M0 46.500h60" stroke="#cfcfd3" stroke-width="1.300"/></svg></div>
  <div class="slot"><svg viewBox="0 0 60 62"><rect width="60" height="62" rx="14" fill="url(#gWeather)"/><circle cx="41" cy="25" r="11" fill="#f5c443"/><path d="M17 47a8.500 8.500 0 0 1-1-17 10.500 10.500 0 0 1 19-4 9 9 0 0 1 11 9 6.500 6.500 0 0 1-2 12z" fill="url(#gCloud)"/></svg></div>
  <div class="slot"><svg viewBox="0 0 60 62"><rect width="60" height="62" rx="14" fill="url(#gMusic)"/><path d="M22 15l21-5v32a6 5 0 1 1-3.500-4.500V21L25 24v22a6 5 0 1 1-3.500-4.500z" fill="#fff"/></svg></div>
  <div class="slot"><svg viewBox="0 0 60 62"><rect width="60" height="62" rx="14" fill="url(#gPod)"/><path d="M20 46a20.500 20.500 0 1 1 20 0M22 38a13 13 0 1 1 16 0" fill="none" stroke="#fff" stroke-width="2.800"/><circle cx="30" cy="27" r="5" fill="#fff"/><path d="M25 38q0-3.500 5-3.500t5 3.500l-2 14q-1 3-3 3t-3-3z" fill="#fff"/></svg></div>
  <div class="slot"><svg viewBox="0 0 60 62"><rect width="60" height="62" rx="14" fill="#fff"/><path d="M32 13h14q2 0 2 2v15zM12 33l15 16H14q-2 0-2-2z" fill="#e84b5f"/><path d="M12 15q0-2 2-2h7l27 33q0 3-2 3h-7L12 17z" fill="#e84b5f"/></svg></div>
  <div class="slot"><svg viewBox="0 0 60 62"><rect width="60" height="62" rx="14" fill="#c8c8c8"/><rect x="14" y="8" width="33" height="47" rx="4" fill="#2c2d2e"/><rect x="17" y="12" width="27" height="9" rx="1.500" fill="#55575a"/><g fill="#d4d4d4"><circle cx="21" cy="28" r="3.200"/><circle cx="30.500" cy="28" r="3.200"/><circle cx="21" cy="38" r="3.200"/><circle cx="30.500" cy="38" r="3.200"/><rect x="17.500" y="44" width="16.500" height="6.500" rx="3.200"/></g><g fill="#f0932e"><circle cx="40" cy="28" r="3.200"/><circle cx="40" cy="38" r="3.200"/><circle cx="40" cy="47.300" r="3.200"/></g></svg></div>
  <div class="slot"><svg viewBox="0 0 60 62"><rect width="60" height="62" rx="14" fill="url(#gStore)"/><path d="M33 14L19 38M27 14l19 34M11 38h38M16 45l-1.500 3" stroke="#fff" stroke-width="5" stroke-linecap="round"/></svg></div>
  <div class="slot"><svg viewBox="0 0 60 62"><rect width="60" height="62" rx="14" fill="url(#gSettings)"/><circle cx="30" cy="31" r="25" fill="#44484a"/><circle cx="30" cy="31" r="25" fill="none" stroke="#1c1e1f" stroke-width="3" stroke-dasharray="1.500 1.500"/><circle cx="30" cy="31" r="20" fill="#3d4042" stroke="#a3a6a7" stroke-width="3"/><circle cx="30" cy="31" r="13" fill="none" stroke="#8f9293" stroke-width="5"/><circle cx="30" cy="31" r="7" fill="#595c5e"/><path d="M30 31h21M30 31L19.500 13M30 31L19.500 49" stroke="#b7babb" stroke-width="2.800"/></svg></div>
  <div class="slot"><svg viewBox="0 0 60 62"><rect width="60" height="62" rx="14" fill="#b9c0c3"/><rect x="1.500" y="1.500" width="57" height="59" rx="13" fill="#000"/><rect x="6" y="7" width="48" height="48" rx="8" fill="#242424"/><path d="M10 12l7 4-7 4M20 23.500h9" fill="none" stroke="#fff" stroke-width="2.200"/></svg></div>
  <div class="slot"><svg viewBox="0 0 60 62"><rect width="60" height="62" rx="14" fill="url(#gZoom)"/><text x="30" y="36" text-anchor="middle" font-size="16" font-weight="600" fill="#fff">zoom</text></svg></div>
  <div class="slot"><svg viewBox="0 0 60 62"><use href="#elephant"/></svg></div>
  <div class="slot"><svg viewBox="0 0 60 62"><path d="M-3-2h38q32 2 31 33T35 65Q-3 64-3 31z" fill="#4b628e"/><path d="M0 0h34q29 2 29 31T34 62Q0 61 0 31z" fill="#f5f7fb"/><path d="M0 0l20 18-12 30Q0 42 0 31z" fill="#a9c0ea" opacity=".6"/><g transform="translate(31 27)"><circle r="22" fill="none" stroke="#77767c" stroke-width="8" stroke-dasharray="8.600 8.680"/><circle r="21.500" fill="none" stroke="#dcdbe0" stroke-width="7" stroke-dasharray="6.600 10.280" stroke-dashoffset="-1"/><circle r="14" fill="none" stroke="#6d6c73" stroke-width="12"/><circle r="14.500" fill="none" stroke="#dedde2" stroke-width="10"/><circle r="9" fill="#b7c9ea" stroke="#6d6c73" stroke-width="1.500"/></g></svg></div>
  <div class="slot run"><svg viewBox="0 0 60 62"><rect width="60" height="62" rx="14" fill="url(#gDiscord)"/><path d="M17 17q5-2.500 8-2.500l1.500 2.500h8L36 14.500q4 0 8 2.500 9 13 8 27-5 4-11 5l-2.500-4.500L42 43q-12 4-23 0l3.500 1.500L20 49q-6-1-11-5-1-14 8-27z" fill="#fff"/><ellipse cx="23" cy="33" rx="4.200" ry="4.800" fill="#5c67ec"/><ellipse cx="38" cy="33" rx="4.200" ry="4.800" fill="#5c67ec"/></svg></div>
  <div class="slot run"><svg viewBox="0 0 60 62"><rect width="60" height="62" rx="14" fill="#f7f7f7"/><use href="#chrome" x="3.500" y="4" width="53" height="54"/></svg></div>
  <div class="slot run"><svg viewBox="0 0 60 62"><rect width="60" height="62" rx="14" fill="#fff"/><path d="M40 9l-31 28 4 4 27-20z" fill="#2767a8"/><path d="M40 53L9 24l4-4 27 20z" fill="#3784cf"/><path d="M40 9l11 5v34l-11 5z" fill="#4a9fec"/></svg></div>
  <div class="slot run"><svg viewBox="0 0 60 62"><path d="M1 2h58v58H1z" fill="url(#gPc)"/><path d="M6 7h48v48H6z" fill="none" stroke="#fff" stroke-opacity=".35" stroke-width="2"/><path d="M9 9h43v44H9z" fill="#0b1408"/><text x="12" y="30.500" font-size="22" font-weight="700" fill="#fff">PC</text><path d="M14 45.500h16" stroke="#fff" stroke-width="3"/></svg></div>
  <div class="slot"><svg viewBox="0 0 60 62"><use href="#blueprint"/><path d="M41 8l7 2-21 53q-3 2-7-1z" fill="#3c3f48"/><path d="M34-3q10-5 20 2l6 6 6 2-1 7-5 1-5-5-16-3q-1-5-5-8z" fill="#4a4d55"/></svg></div>
  <div class="slot"><svg viewBox="0 0 60 62"><use href="#blueprint"/><path d="M45 15l18 9q3 2 1 5L45 62q-3 3-6 1L25 54q-3-2-1-6z" fill="#121316"/><path d="M42 22l-6 14 12 14M33 38l18 8" stroke="#dcdcdc" stroke-width="5" stroke-linecap="round" fill="none"/></svg></div>
  <i class="rule"></i>
  <div class="slot run"><svg viewBox="0 0 60 62"><use href="#elephant"/></svg></div>
  <div class="slot run"><svg viewBox="0 0 60 62"><rect width="60" height="62" rx="14" fill="url(#gQt)"/><circle cx="30" cy="31" r="24.500" fill="url(#gRing)"/><circle cx="30" cy="31" r="15.500" fill="url(#gQtIn)"/><path d="M28 28l8-3 19 30h-8z" fill="#a7abaf"/></svg></div>
  <div class="slot run"><svg viewBox="0 0 60 62"><rect width="60" height="62" rx="14" fill="url(#gBooks)"/><path d="M10 22q3-7 10-7t9 6v26q-9-6-19 0zM50 22q-3-7-10-7t-9 6v26q9-6 19 0z" fill="#f6efe9"/></svg></div>
  <i class="rule"></i>
  <div class="slot"><svg viewBox="3 0 60 62"><path d="M11-6h39v8H11z" fill="#fff"/><path d="M12-3h37v1H12z" fill="#555"/><path d="M8-1h46v66H8z" fill="#f2f2f2"/><path d="M10 1h42v4H10zM37 4h15v18z" fill="#77797a"/><path d="M28 4h7v34h-7z" fill="#50555a"/><path d="M31.500 4v34" stroke="#b9c4cc" stroke-width="3" stroke-dasharray="1.500 1.500"/><path d="M37 4l16 17H37z" fill="#e2e2e2"/><text x="31" y="61" text-anchor="middle" font-size="10" fill="#666">ZIP</text></svg></div>
  <div class="slot"><svg viewBox="3 0 60 62"><path d="M-6 10h72v42H-6z" fill="#fafafa"/><path d="M-6 10h72v4H-6z" fill="#d9d7bd"/><path d="M-6 14h72v3H-6z" fill="#dadada"/><path d="M-4 20h5v2h-5zM-4 26h5M-4 30h5M-4 34h5M8 21h14M24 21h14M8 24h20M8 28h12v11H8zM22 28h11v11H22z" stroke="#cdd3df" stroke-width="1" fill="none"/><rect x="41" y="43" width="23" height="23" rx="5" fill="#fff"/><use href="#chrome" x="42.500" y="44.500" width="20" height="20"/></svg></div>
  <div class="slot"><svg viewBox="3 0 60 62"><path d="M-6 10h72v42H-6z" fill="#1c1c20"/><path d="M-6 10h72v6H-6z" fill="#d0cfc8"/><path d="M3 18h54v32H3z" fill="#fafafa"/><path d="M3 18h54v3H3z" fill="#d8d8d8"/><path d="M6 30h15v14H6z" fill="#b7c9f2"/><path d="M9 36v6M15 32l-2 8" stroke="#556" fill="none" stroke-width="1.300"/><path d="M29 29h14" stroke="#999" stroke-width="1.500"/><path d="M29 33h6" stroke="#5a9fe0" stroke-width="2"/><path d="M35 33h5" stroke="#6bc06b" stroke-width="2"/><rect x="41" y="43" width="23" height="23" rx="5" fill="#fff"/><use href="#chrome" x="42.500" y="44.500" width="20" height="20"/></svg></div>
  <div class="slot"><svg viewBox="2 0 60 62"><path d="M3 4h54l-6 57q-1 5-21 5T9 61z" fill="url(#gCan)"/><path d="M3 4q2-5 10-4l5-6 7 4 6-3 6 4 8-2 4 5q7 0 8 4-10 6-27 6T3 4z" fill="#e6e6e4"/><path d="M13 1l5 5 5-6zM28 3l6 4 2-8zM42 0l-4 8 9-2z" fill="#5d6068"/><path d="M35 5h6v3h-6z" fill="#c8553a"/><path d="M22 6h4v3h-4z" fill="#4d7fb8"/></svg></div>
</footer>
<script src="fit.js"></script>
</body>
</html>
```
FILE: styles.css
```css
* { box-sizing: border-box; }
body {
  margin: 0;
  width: 3024px;
  height: 1964px;
  overflow: hidden;
  position: relative;
  background: linear-gradient(90deg, #b7b8b0, #8d8d86 50%, #b9aea0) top / 100% 120px no-repeat #0c0e06;
  font-family: Inter, "Liberation Sans", sans-serif;
  color: #000;
  display: flex;
  flex-direction: column;
}
svg { display: block; flex: none; overflow: visible; }
.defs { position: absolute; }
.fit { display: inline-block; white-space: pre; flex: none; }
h1, h2 { margin: 0; }

/* macOS menu bar */
.menubar {
  height: 74px;
  flex: none;
  display: flex;
  align-items: center;
  background: linear-gradient(90deg, #f1f0ea, #ecebe5 50%, #e3e2dc);
  font-size: 26px;
  font-weight: 500;
  line-height: 72px;
}
.apple { margin: 0 0 4px 37px; }
.menus { display: flex; gap: 35.5px; margin-left: 39px; }
.menus b { font-weight: 700; }
.status {
  display: grid;
  grid-template-columns: 63px 84px 64px 89px 74px 66px 63px 61px;
  align-items: center;
  margin-left: auto;
}
.menubar .clock { display: flex; margin-right: 33px; font-weight: 400; color: #222; gap: 0; }
.menubar .clock .fit:nth-child(2) { margin: 0 3px 0 14px; }

/* browser window */
.window {
  height: 1776px;
  margin-top: 2px;
  flex: none;
  display: flex;
  flex-direction: column;
  border-radius: 20px 20px 24px 24px;
  overflow: hidden;
  background: #fff;
  box-shadow: 0 0 0 1px #14101a;
  position: relative;
  z-index: 1;
}
.tabstrip {
  height: 80px;
  display: flex;
  background: #e5e5e6;
  border-top: 1px solid #fafafa;
  flex: none;
}
.lights { display: flex; gap: 16px; padding: 28px 0 0 42px; width: 185px; }
.lights i { width: 24px; height: 24px; border-radius: 50%; border: 1px solid rgba(0,0,0,.12); }
.red { background: #ed6a5e; }
.yellow { background: #f4bf4f; }
.green { background: #61c554; }
.tab {
  width: 463px;
  height: 68px;
  margin-top: 11px;
  padding: 0 24px 12px 17px;
  display: flex;
  align-items: center;
  background: #ebebec;
  border-radius: 18px 18px 0 0;
  position: relative;
}
.tab::before, .tab::after {
  content: "";
  position: absolute;
  bottom: 0;
  width: 20px;
  height: 20px;
}
.tab::before { left: -20px; background: radial-gradient(circle at 0 0, transparent 19.500px, #e9e9e9 20px); }
.tab::after { right: -20px; background: radial-gradient(circle at 100% 0, transparent 19.500px, #e9e9e9 20px); }
.tab-globe { color: #5f6368; margin-right: 18px; }
.globe-land { fill: #e6e6e6; }
.tab-title { font-size: 23.500px; font-weight: 500; margin-right: auto; line-height: 30px; }
.plus { margin: 28px 0 0 29px; }
.tab-search {
  width: 57px;
  height: 57px;
  margin: 11px 12px 0 auto;
  border-radius: 50%;
  background: #e2e2e3;
  display: grid;
  place-items: center;
}
.toolbar {
  height: 92px;
  flex: none;
  display: flex;
  align-items: center;
  background: linear-gradient(#e9e9e9, #e5e5e5);
}
.nav { display: flex; gap: 45.5px; padding-left: 32px; width: 240px; }
.omnibox {
  width: 2076px;
  height: 68px;
  border-radius: 34px;
  background: #c8c8c8;
  display: flex;
  align-items: center;
  padding: 0 32px 0 10px;
  flex: none;
}
.info {
  width: 48px;
  height: 48px;
  border-radius: 50%;
  background: #e4e4e4;
  display: grid;
  place-items: center;
}
.url { font-size: 28px; line-height: 66px; color: #4f5154; margin: 0 auto 0 17px; }
.host { color: #1f2023; }
.extensions {
  display: grid;
  grid-template-columns: 72px 72px 74px 71px 67px 41px 72px 54px 102px 6px;
  align-items: center;
  margin-left: 36px;
}
.puzzle { margin-top: -4px; }
.divider { width: 4px; height: 32px; border-radius: 2px; background: #cecece; }
.avatar { width: 66px; height: 66px; border-radius: 50%; background: #e1e1e1; display: grid; place-items: center; }
.bookmarks {
  height: 70px;
  flex: none;
  display: flex;
  gap: 40px;
  padding: 0 54px 14px 24px;
  background: #e4e4e4;
  border-bottom: 2px solid #c5c6ca;
  font-size: 24.500px;
  font-weight: 500;
  line-height: 54px;
}
.bookmarks a { display: flex; align-items: center; gap: 12px; }
.bookmarks .dir svg { margin: 0 3px; }
.bm-globe { color: #3c4043; }
.bookmarks .more { margin: 18px 0 0 auto; }

/* job list page */
.page {
  flex: 1;
  position: relative;
  font-family: Ubuntu, "Noto Sans", sans-serif;
  color: #212529;
  -webkit-text-stroke: .3px;
}
.banner { height: 147px; background: #f8f9fb; padding-left: 62px; }
.banner h1 { font-size: 64px; font-weight: 600; line-height: 149px; color: #181818; -webkit-text-stroke: 0; }
.content { padding: 97px 0 0 402px; }
.content h2 { height: 48px; font-size: 40px; font-weight: 600; line-height: 48px; margin-bottom: 70px; -webkit-text-stroke: 0; }
.cards { display: grid; grid-template-columns: repeat(3, 700px); gap: 54px 60px; }
.card { height: 407px; border: 2px solid #dfdfdf; border-radius: 8px; padding: 32px; }
.top { display: flex; gap: 16px; height: 140px; }
.info-col { padding-top: 5px; white-space: nowrap; }
.role { display: block; height: 38px; line-height: 38px; font-size: 32px; color: #3478f6; }
.field { height: 50px; line-height: 49px; font-size: 26px; color: #808080; }
.pay, .addr { display: flex; align-items: center; height: 40px; line-height: 42px; font-size: 26px; }
.pay svg { margin-right: 6px; }
.addr { margin-top: 32px; line-height: 40px; }
.addr svg { margin-right: 5px; }
.foot { display: flex; justify-content: space-between; margin-top: 63px; }
.date { display: flex; align-items: center; height: 74px; font-size: 25px; line-height: 30px; }
.date svg { margin: 1px 5px 0 0; }
.apply {
  width: 184px;
  height: 64px;
  border-radius: 8px;
  background: #3478f6;
  color: #fff;
  font-size: 25px;
  line-height: 60px;
  font-weight: 400;
  display: flex;
  align-items: center;
  justify-content: center;
  gap: 4px;
  padding: 0 1px 2px 0;
}
.jaccs { font: 900 54px Inter, sans-serif; fill: #45994e; stroke: #45994e; stroke-width: 1.500px; }
.evergreen { font: 900 15px Inter, sans-serif; letter-spacing: 4px; fill: #2b6112; stroke: #fff; stroke-width: 2px; paint-order: stroke; }
.dock-shade {
  position: absolute;
  left: 0;
  right: 0;
  bottom: 0;
  height: 100px;
  background: linear-gradient(rgba(0,0,0,0), rgba(0,0,0,.035) 50%, rgba(0,0,0,.13));
  mask-image: linear-gradient(90deg, transparent 10px, #000 150px, #000 2874px, transparent 3014px);
}

/* desktop and dock */
.wallpaper { position: absolute; left: 0; bottom: 0; width: 3024px; height: 164px; }
.dock {
  width: 2899px;
  height: 98px;
  margin: 4px 0 0 63px;
  flex: none;
  display: flex;
  padding: 0 3px;
  position: relative;
  z-index: 2;
  border-radius: 30px;
  border: 2px solid rgba(255,255,255,.2);
  background: linear-gradient(90deg, #5e6158, #65655a 7%, #7a745c 12%, #7c7c58 16%, #75785a 32%, #7d7b5b 41%, #876f58 49%, #706a5c 54%, #5f6159 58%, #5f625a 72%, #866f58 78%, #8c7359 81%, #776e5a 87%, #756a5a 92%, #65645a 96%, #606156);
}
.slot { width: 80.450px; flex: none; display: flex; justify-content: center; padding-top: 13px; position: relative; }
.slot svg { width: 60px; height: 62px; }
.slot svg text { font-family: Inter, sans-serif; }
.run::after {
  content: "";
  position: absolute;
  left: 36px;
  bottom: 2px;
  width: 8px;
  height: 8px;
  border-radius: 50%;
  background: #000;
}
.rule { width: 36.5px; flex: none; }
.rule::before { content: ""; display: block; width: 2px; height: 70px; margin: 12px auto 0; background: #4e3d2c; }
```
FILE: fit.js
```js
// Bring each label to its intended width: by type size on the page,
// by letter-spacing in the surrounding chrome.
document.querySelectorAll('.fit').forEach(function (el) {
  var range = document.createRange();
  range.selectNodeContents(el);
  var natural = range.getBoundingClientRect().width;
  var target = Number(el.dataset.w);
  if (el.closest('.page')) {
    var size = parseFloat(getComputedStyle(el).fontSize);
    el.style.fontSize = size * target / natural + 'px';
  } else {
    el.style.letterSpacing = (target - natural) / Array.from(el.textContent).length + 'px';
  }
});
```
